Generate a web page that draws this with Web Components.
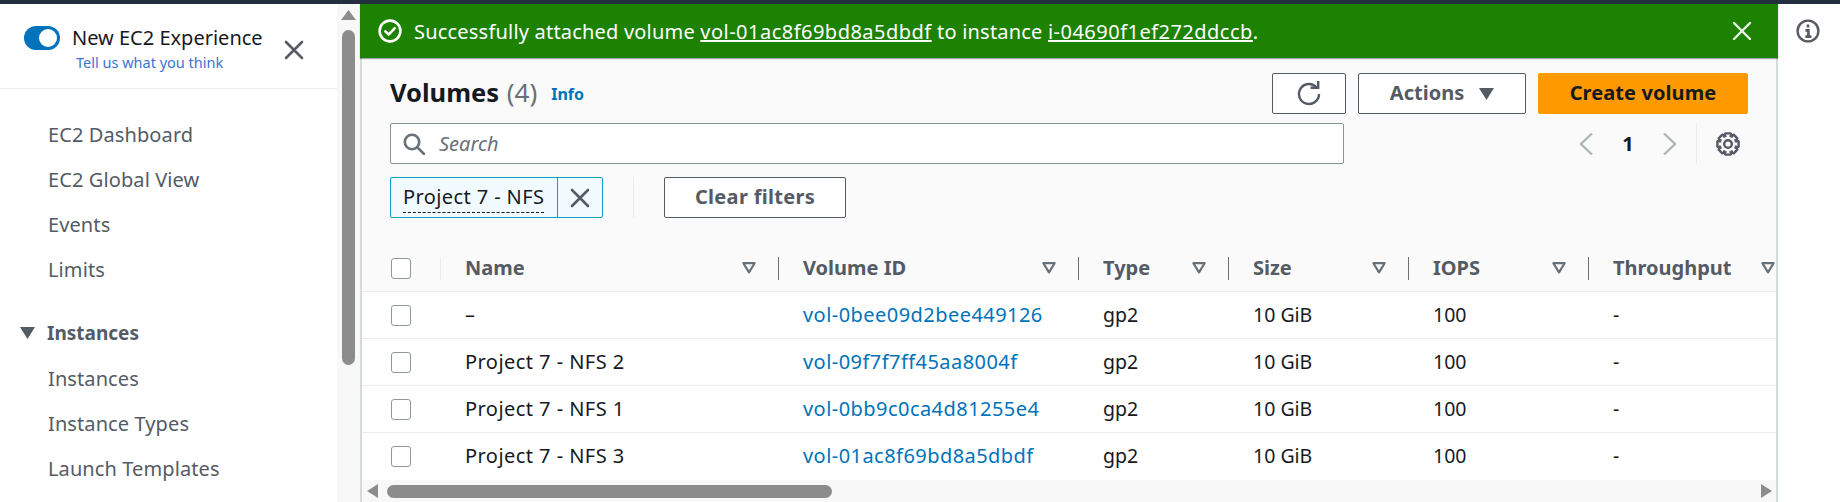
<!DOCTYPE html>
<html lang="en">
<head>
<meta charset="utf-8">
<title>Volumes | EC2</title>
<style>
  html, body { margin: 0; height: 502px; overflow: hidden; background: #fff; }
  body { font-family: "Noto Sans", "Open Sans", sans-serif; font-size: 20px; color: #16191f; }
</style>
</head>
<body>
<ec2-app></ec2-app>
<script>
const ICON_X = (size, color, w) => `<svg width="${size}" height="${size}" viewBox="0 0 20 20" fill="none" stroke="${color}" stroke-width="${w}" stroke-linecap="round"><path d="M2 2l16 16M18 2L2 18"/></svg>`;

// 8 tooth gear outline, centred on 12,12
function gearPath() {
  let d = '';
  for (let i = 0; i < 8; i++) {
    const a = i * Math.PI / 4;
    const pts = [[-0.48, 8.4], [-0.24, 10.9], [0.24, 10.9], [0.48, 8.4]];
    for (const [o, r] of pts) {
      const x = 12 + r * Math.sin(a + o), y = 12 - r * Math.cos(a + o);
      d += (d ? 'L' : 'M') + x.toFixed(2) + ' ' + y.toFixed(2);
    }
  }
  return d + 'Z';
}

class Ec2NavItem extends HTMLElement {
  connectedCallback() {
    this.attachShadow({ mode: 'open' });
    this.shadowRoot.innerHTML = `
      <style>
        :host { display: flex; align-items: center; height: 45px; padding-left: 48px; color: #545b64; white-space: nowrap; letter-spacing: .1px; }
      </style>
      <slot></slot>`;
  }
}
customElements.define('ec2-nav-item', Ec2NavItem);

class Ec2SideNav extends HTMLElement {
  connectedCallback() {
    this.attachShadow({ mode: 'open' });
    this.shadowRoot.innerHTML = `
      <style>
        :host { display: flex; flex: 0 0 360px; height: 498px; overflow: hidden; background: #fff; }
        .main { width: 337px; flex: none; }
        .head { height: 84px; border-bottom: 1px solid #eaeded; display: flex; }
        .toggle { width: 36px; height: 24px; margin: 22px 0 0 24px; border-radius: 12px; background: #0073bb; position: relative; flex: none; }
        .toggle::after { content: ""; position: absolute; right: 3px; top: 3px; width: 18px; height: 18px; border-radius: 50%; background: #fff; }
        .titles { margin: 0 0 0 12px; width: 201px; flex: none; white-space: nowrap; }
        .t1 { color: #16191f; line-height: 26px; margin-top: 21px; }
        .t2 { color: #3b73d1; font-size: 14.5px; line-height: 20px; margin: 1px 0 0 4px; }
        .close { margin: 35px 0 0 11px; flex: none; }
        nav { padding-top: 23px; }
        .group { display: flex; align-items: center; height: 45px; margin: 18px 0 1px; padding-left: 20px; color: #545b64; font-weight: 700; font-size: 19px; }
        .group svg { margin-right: 12px; }
        .bar { width: 23px; background: #f8f8f8; display: flex; flex-direction: column; align-items: center; padding-top: 6px; box-sizing: border-box; }
        .thumb { width: 13px; height: 335px; margin-top: 10px; border-radius: 7px; background: #8c8c8c; }
      </style>
      <div class="main">
        <div class="head">
          <span class="toggle"></span>
          <div class="titles">
            <div class="t1">New EC2 Experience</div>
            <div class="t2">Tell us what you think</div>
          </div>
          <span class="close">${ICON_X(20, '#545b64', 2.6)}</span>
        </div>
        <nav>
          <ec2-nav-item>EC2 Dashboard</ec2-nav-item>
          <ec2-nav-item>EC2 Global View</ec2-nav-item>
          <ec2-nav-item>Events</ec2-nav-item>
          <ec2-nav-item>Limits</ec2-nav-item>
          <div class="group"><svg width="15" height="12" viewBox="0 0 15 12"><path d="M0 0h15L7.5 12z" fill="#545b64"/></svg>Instances</div>
          <ec2-nav-item>Instances</ec2-nav-item>
          <ec2-nav-item>Instance Types</ec2-nav-item>
          <ec2-nav-item>Launch Templates</ec2-nav-item>
        </nav>
      </div>
      <div class="bar">
        <svg width="15" height="10" viewBox="0 0 15 10"><path d="M7.5 0L15 10H0z" fill="#8c8c8c"/></svg>
        <div class="thumb"></div>
      </div>`;
  }
}
customElements.define('ec2-side-nav', Ec2SideNav);

class Ec2Flash extends HTMLElement {
  connectedCallback() {
    this.attachShadow({ mode: 'open' });
    this.shadowRoot.innerHTML = `
      <style>
        :host { display: flex; align-items: center; height: 54px; padding: 0 26px 0 18px; background: #1d8102; color: #fff; box-shadow: 0 1px 1px rgba(0,0,0,.35); position: relative; white-space: nowrap; letter-spacing: .2px; }
        svg.ok { margin-right: 12px; flex: none; }
        .msg { flex: 1; }
      </style>
      <svg class="ok" width="24" height="24" viewBox="0 0 24 24" fill="none" stroke="#fff" stroke-width="2.6"><circle cx="12" cy="12" r="10.4"/><path d="M7.4 12.4l3.3 3.2 6-6.4" stroke-linecap="round" stroke-linejoin="round"/></svg>
      <div class="msg"><slot></slot></div>
      ${ICON_X(20, '#e9f2e6', 2.4)}`;
  }
}
customElements.define('ec2-flash', Ec2Flash);

class Ec2Button extends HTMLElement {
  connectedCallback() {
    this.attachShadow({ mode: 'open' });
    this.shadowRoot.innerHTML = `
      <style>
        :host { display: inline-flex; align-items: center; justify-content: center; gap: 15px; box-sizing: border-box; height: 41px; padding-bottom: 2px; border: 1px solid #545b64; border-radius: 2px; background: #fff; color: #545b64; font-weight: 700; white-space: nowrap; }
        :host([primary]) { background: #ff9900; border-color: #ff9900; color: #16191f; letter-spacing: .1px; }
      </style>
      <slot></slot>`;
  }
}
customElements.define('ec2-button', Ec2Button);

class Ec2HeaderCell extends HTMLElement {
  connectedCallback() {
    this.attachShadow({ mode: 'open' });
    this.shadowRoot.innerHTML = `
      <style>
        :host { display: flex; align-items: center; justify-content: space-between; box-sizing: border-box; height: 46px; padding: 0 23px 0 24px; color: #545b64; font-weight: 700; white-space: nowrap; position: relative; }
        :host::after { content: ""; position: absolute; right: 0; top: 12px; height: 23px; width: 1px; background: #687078; }
        :host([last])::after { display: none; }
        .label { margin-top: -2px; }
        svg { flex: none; }
      </style>
      <span class="label"><slot></slot></span>
      <svg width="14" height="12" viewBox="0 0 14 12" fill="none" stroke="#687078" stroke-width="2.2" stroke-linejoin="round"><path d="M1.4 1.2h11.2L7 10.4z"/></svg>`;
  }
}
customElements.define('ec2-header-cell', Ec2HeaderCell);

class Ec2Checkbox extends HTMLElement {
  connectedCallback() {
    this.attachShadow({ mode: 'open' });
    this.shadowRoot.innerHTML = `
      <style>
        :host { display: block; box-sizing: border-box; width: 20px; height: 21px; border: 1.5px solid #8d9a9b; border-radius: 3px; background: #fff; }
      </style>`;
  }
}
customElements.define('ec2-checkbox', Ec2Checkbox);

class Ec2VolumeRow extends HTMLElement {
  connectedCallback() {
    const d = this.dataset;
    this.attachShadow({ mode: 'open' });
    this.shadowRoot.innerHTML = `
      <style>
        :host { display: grid; grid-template-columns: var(--cols); height: 47px; box-sizing: border-box; border-bottom: 1px solid #eaeded; background: #fff; white-space: nowrap; font-size: 19.5px; }
        :host([last]) { border-bottom: 0; }
        div { display: flex; align-items: center; padding: 0 0 2px 24px; color: #16191f; overflow: hidden; }
        .check { padding: 0 0 0 29px; }
        .name, .id { font-size: 20px; letter-spacing: .45px; }
        .id { color: #0073bb; }
      </style>
      <div class="check"><ec2-checkbox></ec2-checkbox></div>
      <div class="name">${d.name}</div>
      <div class="id">${d.id}</div>
      <div>gp2</div>
      <div>10 GiB</div>
      <div>100</div>
      <div>-</div>`;
  }
}
customElements.define('ec2-volume-row', Ec2VolumeRow);

class Ec2VolumeTable extends HTMLElement {
  connectedCallback() {
    this.attachShadow({ mode: 'open' });
    this.shadowRoot.innerHTML = `
      <style>
        :host { display: block; overflow: hidden; --cols: 79px 338px 300px 150px 180px 180px 209px; }
        .head { display: grid; grid-template-columns: var(--cols); height: 46px; width: 1436px; border-top: 1px solid #eaeded; border-bottom: 1px solid #eaeded; margin-top: -1px; background: #fafafa; }
        .check { display: flex; align-items: center; padding-left: 29px; position: relative; }
        .check::after { content: ""; position: absolute; right: 0; top: 12px; height: 23px; width: 1px; background: #eaeded; }
      </style>
      <div class="head">
        <div class="check"><ec2-checkbox></ec2-checkbox></div>
        <ec2-header-cell>Name</ec2-header-cell>
        <ec2-header-cell>Volume ID</ec2-header-cell>
        <ec2-header-cell>Type</ec2-header-cell>
        <ec2-header-cell>Size</ec2-header-cell>
        <ec2-header-cell>IOPS</ec2-header-cell>
        <ec2-header-cell last>Throughput</ec2-header-cell>
      </div>
      <div><slot></slot></div>`;
  }
}
customElements.define('ec2-volume-table', Ec2VolumeTable);

class Ec2VolumesPanel extends HTMLElement {
  connectedCallback() {
    this.attachShadow({ mode: 'open' });
    this.shadowRoot.innerHTML = `
      <style>
        :host { display: block; box-sizing: border-box; height: 444px; background: #fafafa; border-left: 2px solid #d5dbdb; border-right: 2px solid #d5dbdb; padding-top: 15px; }
        .bar1, .bar2, .bar3 { display: flex; align-items: center; padding-left: 28px; }
        .bar1 { height: 41px; padding-right: 28px; }
        h1 { margin: -3px 0 0; font-size: 25.5px; font-weight: 700; color: #16191f; white-space: nowrap; word-spacing: 1px; }
        h1 span { font-weight: 400; color: #687078; font-size: 26px; }
        .info { color: #0073bb; font-size: 16px; font-weight: 700; margin-left: 14px; margin-top: 1px; }
        .actions { margin-left: auto; display: flex; gap: 12px; }
        .bar2 { height: 41px; margin-top: 9px; }
        .search { box-sizing: border-box; width: 954px; height: 41px; border: 1px solid #879596; border-radius: 2px; background: #fff; display: flex; align-items: center; padding-left: 12px; color: #687078; font-style: italic; }
        .search svg { margin-right: 14px; }
        .pager { margin-left: 235px; display: flex; align-items: center; height: 41px; }
        .num { width: 70px; text-align: center; font-weight: 700; color: #16191f; }
        .pager .sep { width: 1px; height: 41px; background: #eaeded; margin: 0 19px; }
        .bar3 { height: 41px; margin-top: 13px; margin-bottom: 27px; }
        .chip { display: flex; box-sizing: border-box; height: 41px; width: 213px; border: 1px solid #0a9fc5; border-radius: 2px; background: #f1faff; white-space: nowrap; }
        .chip .txt { flex: 0 0 167px; box-sizing: border-box; border-right: 1px solid #0a9fc5; padding-left: 12px; line-height: 37px; letter-spacing: .4px; }
        .chip .txt span { border-bottom: 1px dashed #16191f; padding-bottom: 2px; }
        .chip .x { flex: 1; display: flex; align-items: center; justify-content: center; }
        .vsep { width: 1px; height: 41px; background: #eaeded; margin: 0 30px; }
        .clear { letter-spacing: .3px; }
        .hbar { height: 22px; display: flex; align-items: center; padding-left: 5px; background: #f8f8f8; }
        .hthumb { width: 445px; height: 13px; border-radius: 7px; background: #8c8c8c; margin-left: 9px; }
        .hbar .end { margin-left: auto; margin-right: 4px; }
      </style>
      <div class="bar1">
        <h1>Volumes <span>(4)</span></h1>
        <span class="info">Info</span>
        <div class="actions">
          <ec2-button style="width:74px;padding-bottom:0">
            <svg width="26" height="26" viewBox="0 0 26 26" fill="none" stroke="#545b64" stroke-width="2.4"><path d="M20.5 6.4A10 10 0 1 0 23 13"/><path d="M14.6 6.8h7.6V0"/></svg>
          </ec2-button>
          <ec2-button style="width:168px">Actions
            <svg width="15" height="12" viewBox="0 0 15 12" style="margin-top:2px"><path d="M0 0h15L7.5 12z" fill="#545b64"/></svg>
          </ec2-button>
          <ec2-button primary style="width:210px">Create volume</ec2-button>
        </div>
      </div>
      <div class="bar2">
        <div class="search">
          <svg width="22" height="22" viewBox="0 0 22 22" fill="none" stroke="#687078" stroke-width="2.6"><circle cx="9" cy="9" r="7.2"/><path d="M14.4 14.4L21 21" stroke-linecap="round"/></svg>
          Search
        </div>
        <div class="pager">
          <svg width="14" height="24" viewBox="0 0 14 24" fill="none" stroke="#aab7b8" stroke-width="2.4"><path d="M13 1.5L2 12l11 10.5"/></svg>
          <span class="num">1</span>
          <svg width="14" height="24" viewBox="0 0 14 24" fill="none" stroke="#aab7b8" stroke-width="2.4"><path d="M1 1.5L12 12 1 22.5"/></svg>
          <span class="sep"></span>
          <svg width="24" height="24" viewBox="0 0 24 24" fill="none" stroke="#545b64" stroke-width="2.4" stroke-linejoin="round"><circle cx="12" cy="12" r="3.8"/><path d="${gearPath()}"/></svg>
        </div>
      </div>
      <div class="bar3">
        <div class="chip"><div class="txt"><span>Project 7 - NFS</span></div><div class="x">${ICON_X(20, '#545b64', 2.6)}</div></div>
        <span class="vsep"></span>
        <ec2-button class="clear" style="width:182px">Clear filters</ec2-button>
      </div>
      <ec2-volume-table><slot></slot></ec2-volume-table>
      <div class="hbar">
        <svg width="11" height="14" viewBox="0 0 11 14"><path d="M11 0v14L0 7z" fill="#8c8c8c"/></svg>
        <div class="hthumb"></div>
        <svg class="end" width="11" height="14" viewBox="0 0 11 14"><path d="M0 0v14L11 7z" fill="#8c8c8c"/></svg>
      </div>`;
  }
}
customElements.define('ec2-volumes-panel', Ec2VolumesPanel);

class Ec2App extends HTMLElement {
  connectedCallback() {
    this.attachShadow({ mode: 'open' });
    this.shadowRoot.innerHTML = `
      <style>
        :host { display: block; width: 1840px; height: 502px; overflow: hidden; }
        .top { height: 4px; background: #232f3e; }
        .body { display: flex; height: 498px; }
        .content { width: 1418px; flex: none; }
        .tools { flex: 1; display: flex; justify-content: center; padding-top: 15px; padding-right: 2px; align-items: flex-start; }
        a { color: #fff; letter-spacing: .48px; }
      </style>
      <div class="top"></div>
      <div class="body">
        <ec2-side-nav></ec2-side-nav>
        <div class="content">
          <ec2-flash>Successfully attached volume <a href="#">vol-01ac8f69bd8a5dbdf</a> to instance <a href="#">i-04690f1ef272ddccb</a>.</ec2-flash>
          <ec2-volumes-panel>
            <ec2-volume-row data-name="–" data-id="vol-0bee09d2bee449126"></ec2-volume-row>
            <ec2-volume-row data-name="Project 7 - NFS 2" data-id="vol-09f7f7ff45aa8004f"></ec2-volume-row>
            <ec2-volume-row data-name="Project 7 - NFS 1" data-id="vol-0bb9c0ca4d81255e4"></ec2-volume-row>
            <ec2-volume-row last data-name="Project 7 - NFS 3" data-id="vol-01ac8f69bd8a5dbdf"></ec2-volume-row>
          </ec2-volumes-panel>
        </div>
        <div class="tools">
          <svg width="24" height="24" viewBox="0 0 24 24" fill="none" stroke="#545b64" stroke-width="2.4"><circle cx="12" cy="12" r="10.4"/><path d="M12 5.6v3M9.4 11.4H12.4v6M9.4 17.6h6" stroke-width="2.6"/></svg>
        </div>
      </div>`;
  }
}
customElements.define('ec2-app', Ec2App);
</script>
</body>
</html>
